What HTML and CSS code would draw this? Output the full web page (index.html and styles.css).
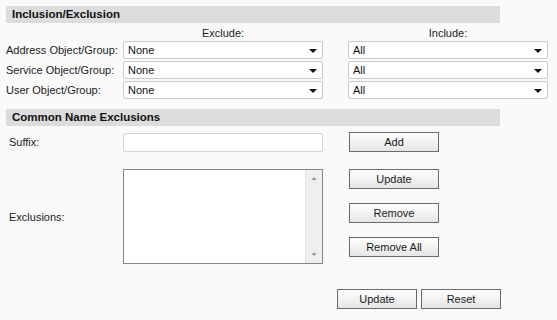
FILE: index.html
```html
<!DOCTYPE html>
<html lang="en">
<head>
  <meta charset="UTF-8">
  <title>Inclusion/Exclusion</title>
  <link rel="stylesheet" href="styles.css">
</head>
<body>

<div class="section">
  <div class="section-head">Inclusion/Exclusion</div>
  <div class="incl-grid">
    <div></div>
    <div class="col-head">Exclude:</div>
    <div class="col-head">Include:</div>

    <label class="row-label">Address Object/Group:</label>
    <div class="select-wrap"><select><option>None</option></select></div>
    <div class="select-wrap"><select><option>All</option></select></div>

    <label class="row-label">Service Object/Group:</label>
    <div class="select-wrap"><select><option>None</option></select></div>
    <div class="select-wrap"><select><option>All</option></select></div>

    <label class="row-label">User Object/Group:</label>
    <div class="select-wrap"><select><option>None</option></select></div>
    <div class="select-wrap"><select><option>All</option></select></div>
  </div>
</div>

<div class="section cn">
  <div class="section-head">Common Name Exclusions</div>
  <div class="cn-grid">
    <label class="row-label">Suffix:</label>
    <input type="text" class="suffix">
    <button class="btn">Add</button>

    <label class="row-label">Exclusions:</label>
    <div class="listbox">
      <div class="list-items"></div>
      <div class="scrollbar">
        <span class="arrow-up"></span>
        <span class="arrow-down"></span>
      </div>
    </div>
    <div class="list-buttons">
      <button class="btn">Update</button>
      <button class="btn">Remove</button>
      <button class="btn">Remove All</button>
    </div>
  </div>
</div>

<div class="footer">
  <button class="btn small">Update</button>
  <button class="btn small">Reset</button>
</div>

</body>
</html>
```

FILE: styles.css
```css
body {
  margin: 0;
  padding: 6px 0 0 0;
  background: #fafafa;
  font-family: "Liberation Sans", Arial, sans-serif;
  font-size: 11px;
  color: #1a1a1a;
}

.section-head {
  margin-left: 6px;
  width: 488px;
  height: 17px;
  line-height: 17px;
  padding-left: 6px;
  background: #dcdcdc;
  font-weight: bold;
  font-size: 11.5px;
  color: #111;
}

.incl-grid {
  display: grid;
  grid-template-columns: 117px 225px 200px;
  grid-template-rows: 16px repeat(3, 18px);
  row-gap: 2px;
  padding-left: 6px;
  align-items: center;
}

.col-head {
  width: 200px;
  text-align: center;
  padding-top: 4px;
}

.row-label {
  white-space: nowrap;
}

.select-wrap {
  position: relative;
  width: 200px;
  height: 18px;
}

.select-wrap select {
  appearance: none;
  -webkit-appearance: none;
  width: 200px;
  height: 18px;
  margin: 0;
  padding: 0 0 0 4px;
  border: 1px solid #c9c9c9;
  border-radius: 2px;
  background: #fff;
  font-family: inherit;
  font-size: 11px;
  color: #111;
}

.select-wrap::after {
  content: "";
  position: absolute;
  right: 6px;
  top: 8px;
  border-left: 4px solid transparent;
  border-right: 4px solid transparent;
  border-top: 4px solid #111;
  pointer-events: none;
}

.cn {
  margin-top: 10px;
}

.cn-grid {
  display: grid;
  grid-template-columns: 114px 226px 90px;
  padding-left: 9px;
  margin-top: 6px;
  row-gap: 17px;
  align-items: center;
}

.suffix {
  width: 200px;
  height: 19px;
  box-sizing: border-box;
  margin: 0;
  border: 1px solid #d4d4d4;
  border-radius: 2px;
  background: #fff;
}

.btn {
  width: 90px;
  height: 20px;
  box-sizing: border-box;
  margin: 0;
  padding: 0;
  border: 1px solid #6a6a70;
  background: linear-gradient(#fefefe, #e6e6e6);
  font-family: inherit;
  font-size: 11px;
  color: #1a1a1a;
}

.listbox {
  display: flex;
  width: 200px;
  height: 95px;
  box-sizing: border-box;
  border: 1px solid #858585;
  background: #fff;
}

.list-items {
  flex: 1;
}

.scrollbar {
  width: 16px;
  background: #efefef;
  border-left: 1px solid #e2e2e2;
  display: flex;
  flex-direction: column;
  justify-content: space-between;
  align-items: center;
  padding: 7px 0;
}

.arrow-up {
  border-left: 3px solid transparent;
  border-right: 3px solid transparent;
  border-bottom: 3px solid #a0a0a0;
}

.arrow-down {
  border-left: 3px solid transparent;
  border-right: 3px solid transparent;
  border-top: 3px solid #a0a0a0;
}

.list-buttons {
  display: flex;
  flex-direction: column;
  gap: 14px;
  align-self: start;
}

.footer {
  display: flex;
  gap: 4px;
  padding-left: 337px;
  margin-top: 25px;
}

.btn.small {
  width: 80px;
}
```
